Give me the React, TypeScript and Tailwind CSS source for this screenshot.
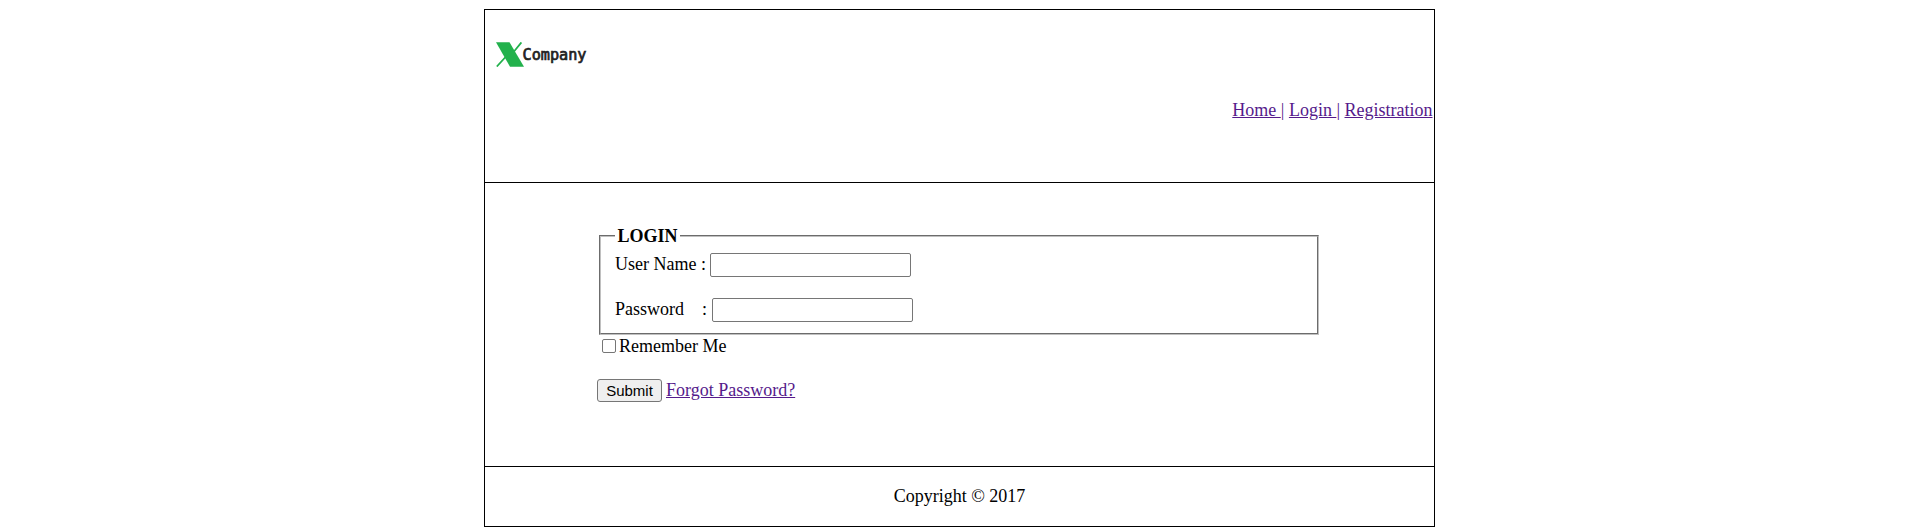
const linkClass = "text-[#551a8b] underline";

function Logo() {
  return (
    <div className="flex h-[25px] items-start">
      <svg width="28" height="25" viewBox="0 0 28 25" className="shrink-0">
        <path d="M25.4 .4L18 9.5M10 14.5L.8 24.5" stroke="#22b14c" strokeWidth="1.8" fill="none" />
        <path d="M0 .3H13.5L28 24.8H14Z" fill="#22b14c" />
      </svg>
      <span className="-ml-[1.5px] mt-[3px] font-['DejaVu_Sans_Mono'] text-[15.2px] leading-[20px] text-[#222] [-webkit-text-stroke:0.7px_#222]">
        Company
      </span>
    </div>
  );
}

function Header() {
  return (
    <header className="flex h-[173px] flex-col border-b border-black">
      <div className="pt-[32px] pl-[11px]">
        <Logo />
      </div>
      <nav className="mt-[33px] pr-[1.5px] text-right text-[#551a8b]">
        <a href="#home" className={linkClass}>{"Home "}</a>|{" "}
        <a href="#login" className={linkClass}>{"Login "}</a>|{" "}
        <a href="#registration" className={linkClass}>Registration</a>
      </nav>
    </header>
  );
}

const inputClass = "h-6 w-[201px] rounded-[2px] border border-[#767676] bg-white px-[2px] font-['Liberation_Sans'] text-[15px] outline-none";

function LoginForm() {
  return (
    <form className="h-[284px] border-b border-black pt-[41px] pl-[112px]" onSubmit={(e) => e.preventDefault()}>
      <fieldset className="ml-[2px] h-[111px] w-[720px] border-2 border-[#c0c0c0] px-[14px] [border-style:groove]">
        <legend className="h-[23px] px-[2.5px] pt-[2px] font-bold">LOGIN</legend>
        <label className="mt-[6px] flex h-6 items-start">
          <span className="mt-px w-[95px] whitespace-pre">User Name :</span>
          <input type="text" className={inputClass} />
        </label>
        <label className="mt-[21px] flex h-6 items-start">
          <span className="mt-px w-[97px] whitespace-pre">{"Password\u00a0\u00a0\u00a0 :"}</span>
          <input type="password" className={inputClass} />
        </label>
      </fieldset>
      <label className="mt-[1px] flex h-[21px] w-fit items-start pl-[5px]">
        <input type="checkbox" className="mt-[3px] mr-[3px] size-[14px] appearance-none rounded-[2px] border border-[#767676] bg-white" />
        Remember Me
      </label>
      <div className="mt-[22px] flex items-center">
        <button className="mr-1 h-[23px] w-[65px] rounded-[3px] border border-[#767676] bg-[#efefef] font-['Liberation_Sans'] text-[15px] leading-[21px]">
          Submit
        </button>
        <a href="#forgot" className={linkClass}>Forgot Password?</a>
      </div>
    </form>
  );
}

export default function App() {
  return (
    <div className="flex h-[530px] justify-center bg-white pt-[9px] font-['Liberation_Serif',serif] text-[18px] leading-[21px] text-black">
      <main className="ml-px h-[518px] w-[951px] border border-black">
        <Header />
        <LoginForm />
        <footer className="flex h-[59px] items-center justify-center">Copyright © 2017</footer>
      </main>
    </div>
  );
}
